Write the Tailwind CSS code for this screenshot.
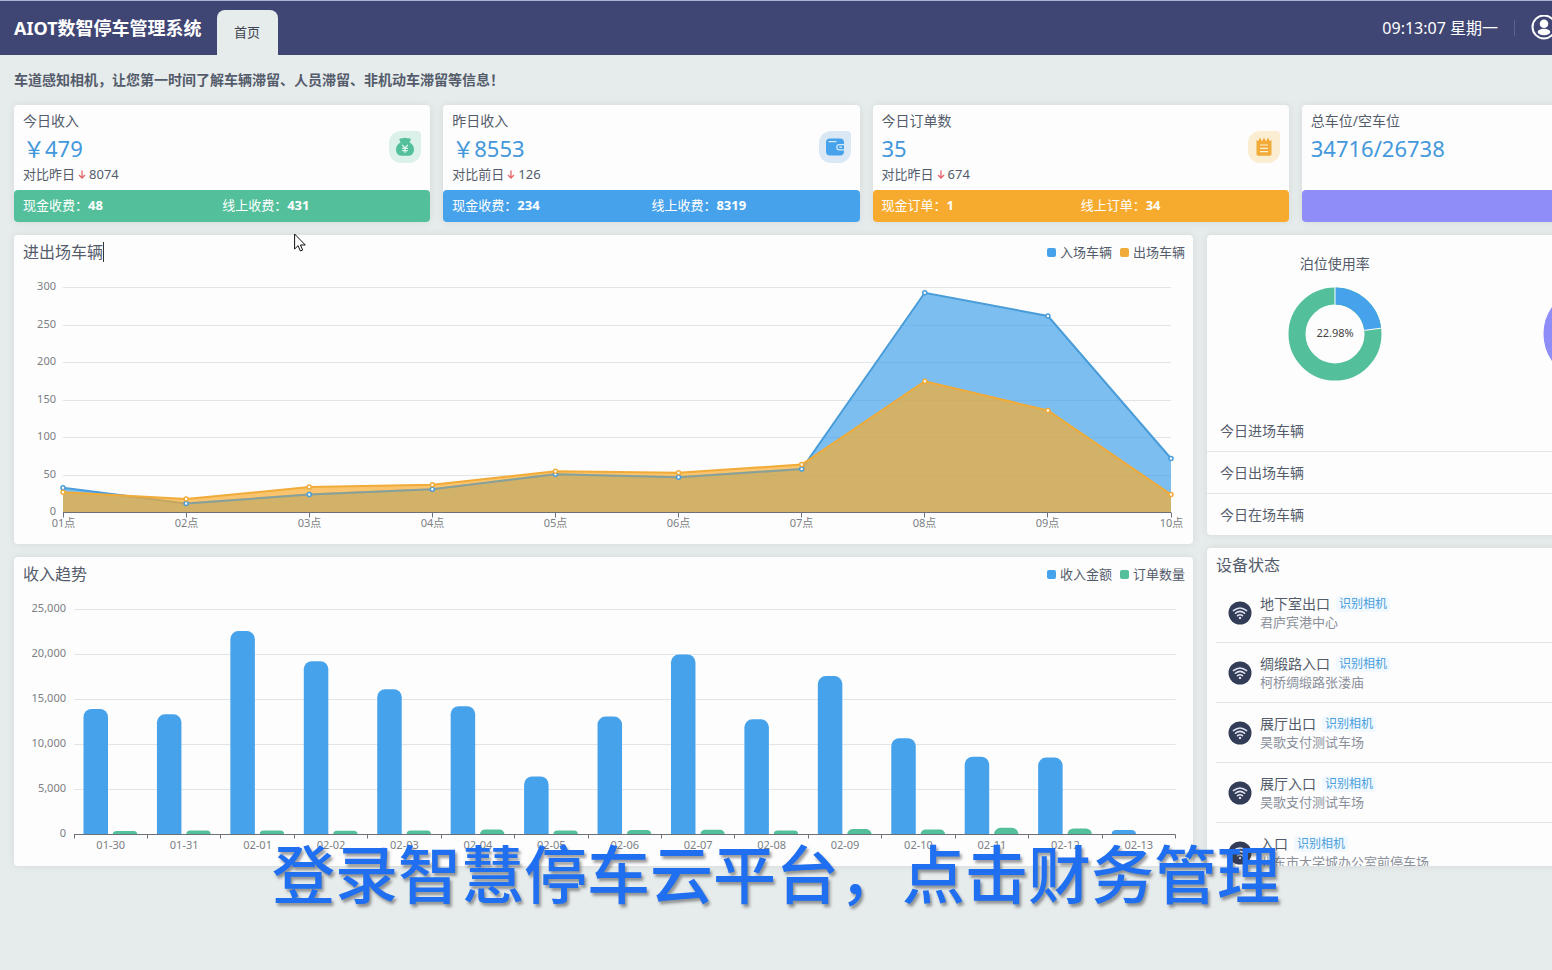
<!DOCTYPE html>
<html lang="zh-CN">
<head>
<meta charset="utf-8">
<meta name="viewport" content="width=device-width, initial-scale=1">
<title>AIOT数智停车管理系统</title>
<script src="https://cdn.jsdelivr.net/npm/@tailwindcss/browser@4"></script>
</head>
<body class="relative min-h-screen overflow-x-hidden bg-[#e6ebeb] font-['Noto_Sans','Noto_Sans_CJK_SC',sans-serif] text-[#545c6b]">

<!-- Shared symbols -->
<svg class="hidden">
  <symbol id="wifi" viewBox="0 0 24 24">
    <circle cx="12" cy="12" r="11.5" fill="#343d58"/>
    <g fill="none" stroke="#dfe3f4" stroke-width="1.5" stroke-linecap="round">
      <path d="M5.4 9.6Q12 4.2 18.6 9.6"/><path d="M7.4 12.3Q12 8.4 16.6 12.3"/><path d="M9.5 14.7Q12 12.7 14.5 14.700"/>
    </g>
    <circle cx="12" cy="16.900" r="1.2" fill="#dfe3f4"/>
  </symbol>
  <symbol id="down" viewBox="0 0 8 9">
    <path d="M4 .5V8M1 5l3 3 3-3" fill="none" stroke="#e5656a" stroke-width="1.3"/>
  </symbol>
</svg>

<div class="w-[calc(100%+180px)]">
  <header class="flex h-[55px] items-end border-t border-[#a9b5d6] bg-[#3f4673] px-3.5 text-white">
    <h1 class="self-center text-lg font-bold">AIOT数智停车管理系统</h1>
    <nav class="ml-[15px]">
      <a href="#" class="flex h-[45px] w-[61px] items-center justify-center rounded-t-lg bg-[#e6ebeb] text-[13px] text-[#3d4350]">首页</a>
    </nav>
    <div class="ml-auto flex items-center self-center">
      <time class="text-base">09:13:07 星期一</time>
      <span class="mx-4 h-4 w-px bg-[#5b628c]"></span>
      <button aria-label="用户" class="w-[187px]">
        <svg class="size-[26px]" viewBox="0 0 26 26"><circle cx="13" cy="12" r="11.5" fill="none" stroke="#fff" stroke-width="2"/><circle cx="13" cy="8.7" r="4.300" fill="#fff"/><ellipse cx="13" cy="17" rx="6.3" ry="3.2" fill="#fff"/></svg>
      </button>
    </div>
  </header>

  <main class="px-3.5">
    <p class="py-[15px] text-sm font-bold">车道感知相机，让您第一时间了解车辆滞留、人员滞留、非机动车滞留等信息！</p>

    <section class="grid grid-cols-4 gap-[13px]">
      <article class="rounded bg-[#fdfdfd] shadow-[0_0_8px_rgba(0,0,0,0.08)]">
        <div class="flex items-center justify-between px-[9px] pt-1.5 pb-[7px]">
          <div>
            <h2 class="text-sm leading-5">今日收入</h2>
            <p class="text-[22px] leading-[34px] text-[#4398dc]">￥479</p>
            <p class="flex items-center gap-[3px] text-[13px] leading-[18px]">对比昨日<svg class="h-[9px] w-2"><use href="#down"/></svg>8074</p>
          </div>
          <span class="flex size-8 items-center justify-center rounded-[12px] rounded-tr-[4px] bg-[#dcf1e9]">
            <svg class="size-[20px]" viewBox="0 0 20 20"><path fill="#53c09b" d="M4.2 2.4Q5 1 7 1.4Q10 .2 13 1.4Q15.4 1 15.8 2.6L14.6 5.6Q19 8 19 12.4Q19 18.8 12.6 18.8H7.4Q1 18.8 1 12.4Q1 8 5.6 5.6Z"/><path d="M7.2 7.8L10 11l2.8-3.2M10 11v5M7.2 11.4h5.6M7.2 13.6h5.6" fill="none" stroke="#e3f5ee" stroke-width="1.2"/></svg>
          </span>
        </div>
        <div class="grid grid-cols-2 rounded bg-[#53c09b] px-[9px] pt-[5px] pb-[7px] text-[13px] leading-5 text-white"><p>现金收费：<b>48</b></p><p>线上收费：<b>431</b></p></div>
      </article>

      <article class="rounded bg-[#fdfdfd] shadow-[0_0_8px_rgba(0,0,0,0.08)]">
        <div class="flex items-center justify-between px-[9px] pt-1.5 pb-[7px]">
          <div>
            <h2 class="text-sm leading-5">昨日收入</h2>
            <p class="text-[22px] leading-[34px] text-[#4398dc]">￥8553</p>
            <p class="flex items-center gap-[3px] text-[13px] leading-[18px]">对比前日<svg class="h-[9px] w-2"><use href="#down"/></svg>126</p>
          </div>
          <span class="flex size-8 items-center justify-center rounded-[12px] rounded-tr-[4px] bg-[#dae8f6]">
            <svg class="size-[20px]" viewBox="0 0 20 20"><rect x="1" y="1.5" width="18" height="17" rx="4" fill="#46a2ea"/><path d="M4 4.6h7" stroke="#d7eafa" stroke-width="1.4" stroke-linecap="round"/><path d="M19 7.6h-4.6a2.6 2.6 0 0 0 0 5.2H19" fill="#46a2ea" stroke="#d7eafa" stroke-width="1.2"/><path d="M14.4 10.2h2.4" stroke="#d7eafa" stroke-width="1.4"/></svg>
          </span>
        </div>
        <div class="grid grid-cols-2 rounded bg-[#46a2ea] px-[9px] pt-[5px] pb-[7px] text-[13px] leading-5 text-white"><p>现金收费：<b>234</b></p><p>线上收费：<b>8319</b></p></div>
      </article>

      <article class="rounded bg-[#fdfdfd] shadow-[0_0_8px_rgba(0,0,0,0.08)]">
        <div class="flex items-center justify-between px-[9px] pt-1.5 pb-[7px]">
          <div>
            <h2 class="text-sm leading-5">今日订单数</h2>
            <p class="text-[22px] leading-[34px] text-[#4398dc]">35</p>
            <p class="flex items-center gap-[3px] text-[13px] leading-[18px]">对比昨日<svg class="h-[9px] w-2"><use href="#down"/></svg>674</p>
          </div>
          <span class="flex size-8 items-center justify-center rounded-[12px] rounded-tr-[4px] bg-[#fbedd1]">
            <svg class="size-[20px]" viewBox="0 0 20 20"><path fill="#f0ab38" d="M2.5 3.4H5V1.6h2v1.8h2V1.6h2v1.8h2V1.6h2v1.8h2.5V17a1.8 1.8 0 0 1-1.8 1.8H4.3A1.8 1.8 0 0 1 2.5 17Z"/><path d="M6 8h8M6 11.3h8M6 14.6h8" stroke="#fdf0d8" stroke-width="1.2"/></svg>
          </span>
        </div>
        <div class="grid grid-cols-2 rounded bg-[#f6ab2f] px-[9px] pt-[5px] pb-[7px] text-[13px] leading-5 text-white"><p>现金订单：<b>1</b></p><p>线上订单：<b>34</b></p></div>
      </article>

      <article class="flex flex-col rounded bg-[#fdfdfd] shadow-[0_0_8px_rgba(0,0,0,0.08)]">
        <div class="px-[9px] pt-1.5">
          <h2 class="text-sm leading-5">总车位/空车位</h2>
          <p class="text-[22px] leading-[34px] text-[#4398dc]">34716/26738</p>
        </div>
        <div class="mt-auto h-8 rounded bg-[#8f8df8]"></div>
      </article>
    </section>

    <div class="mt-[13px] grid grid-cols-[1179fr_511fr] gap-3.5">
      <div class="flex flex-col gap-[13px]">
        <section class="rounded bg-[#fdfdfd] shadow-[0_0_8px_rgba(0,0,0,0.08)]">
          <div class="flex h-10 items-start justify-between px-2 pt-1.5">
            <h2 class="flex items-center pl-px text-base leading-[22px]">进出场车辆<span class="h-5 w-px bg-[#333]"></span></h2>
            <ul class="flex gap-2 text-[13px] leading-[22px]">
              <li class="flex items-center gap-1"><i class="size-[9px] rounded-[2px] bg-[#46a2ea]"></i>入场车辆</li>
              <li class="flex items-center gap-1"><i class="size-[9px] rounded-[2px] bg-[#f0ab38]"></i>出场车辆</li>
            </ul>
          </div>
          <svg id="flow" class="block h-auto w-full text-[11px]" viewBox="0 0 1179 269" role="img" aria-label="进出场车辆"></svg>
        </section>
        <section class="rounded bg-[#fdfdfd] shadow-[0_0_8px_rgba(0,0,0,0.08)]">
          <div class="flex h-10 items-start justify-between px-2 pt-1.5">
            <h2 class="pl-px text-base leading-[22px]">收入趋势</h2>
            <ul class="flex gap-2 text-[13px] leading-[22px]">
              <li class="flex items-center gap-1"><i class="size-[9px] rounded-[2px] bg-[#46a2ea]"></i>收入金额</li>
              <li class="flex items-center gap-1"><i class="size-[9px] rounded-[2px] bg-[#53c09b]"></i>订单数量</li>
            </ul>
          </div>
          <svg id="income" class="block h-auto w-full text-[11px]" viewBox="0 0 1179 269" role="img" aria-label="收入趋势"></svg>
        </section>
      </div>

      <div class="flex flex-col gap-[13px]">
        <section class="rounded bg-[#fdfdfd] shadow-[0_0_8px_rgba(0,0,0,0.08)]">
          <div class="grid grid-cols-2 pt-[19px] pb-7 text-center">
            <div>
              <h2 class="text-sm leading-5">泊位使用率</h2>
              <svg class="mx-auto mt-3 block size-[96px] text-[11px]" viewBox="-48 -48 96 96">
                <circle r="38" fill="none" stroke="#53c09b" stroke-width="17"/>
                <circle r="38" fill="none" stroke="#46a2ea" stroke-width="17" pathLength="100" stroke-dasharray="22.98 100" transform="rotate(-90)"/>
                <path d="M0-29V-47M29.2-3.6L46.6-5.9" stroke="#fdfdfd" stroke-width="1"/>
                <text y="3" text-anchor="middle" fill="#444">22.98%</text>
              </svg>
            </div>
            <div class="pt-8">
              <svg class="mx-auto block size-[96px]" viewBox="-48 -48 96 96"><circle r="38" fill="none" stroke="#8f8df8" stroke-width="17"/></svg>
            </div>
          </div>
          <ul class="divide-y divide-[#e4e7ea] text-sm leading-[21px]">
            <li class="px-[13px] py-2.5">今日进场车辆</li>
            <li class="px-[13px] py-2.5">今日出场车辆</li>
            <li class="px-[13px] py-2.5">今日在场车辆</li>
          </ul>
        </section>

        <section class="h-0 grow overflow-hidden rounded bg-[#fdfdfd] px-[9px] pt-1.5 shadow-[0_0_8px_rgba(0,0,0,0.08)]">
          <h2 class="text-base leading-[22px]">设备状态</h2>
          <ul class="mt-[7px] divide-y divide-[#e4e7ea]">
            <li class="flex items-center gap-2 px-3 py-[11px]"><svg class="size-6"><use href="#wifi"/></svg><div><p class="flex items-center gap-1.5 text-sm leading-5">地下室出口<span class="rounded-sm bg-[#f1f8fe] px-[3px] text-xs leading-4 text-[#4a9fdc]">识别相机</span></p><p class="text-[13px] leading-[17px] text-[#8b909b]">君庐宾港中心</p></div></li>
            <li class="flex items-center gap-2 px-3 py-[11px]"><svg class="size-6"><use href="#wifi"/></svg><div><p class="flex items-center gap-1.5 text-sm leading-5">绸缎路入口<span class="rounded-sm bg-[#f1f8fe] px-[3px] text-xs leading-4 text-[#4a9fdc]">识别相机</span></p><p class="text-[13px] leading-[17px] text-[#8b909b]">柯桥绸缎路张溇庙</p></div></li>
            <li class="flex items-center gap-2 px-3 py-[11px]"><svg class="size-6"><use href="#wifi"/></svg><div><p class="flex items-center gap-1.5 text-sm leading-5">展厅出口<span class="rounded-sm bg-[#f1f8fe] px-[3px] text-xs leading-4 text-[#4a9fdc]">识别相机</span></p><p class="text-[13px] leading-[17px] text-[#8b909b]">昊歌支付测试车场</p></div></li>
            <li class="flex items-center gap-2 px-3 py-[11px]"><svg class="size-6"><use href="#wifi"/></svg><div><p class="flex items-center gap-1.5 text-sm leading-5">展厅入口<span class="rounded-sm bg-[#f1f8fe] px-[3px] text-xs leading-4 text-[#4a9fdc]">识别相机</span></p><p class="text-[13px] leading-[17px] text-[#8b909b]">昊歌支付测试车场</p></div></li>
            <li class="flex items-center gap-2 px-3 py-[11px]"><svg class="size-6"><use href="#wifi"/></svg><div><p class="flex items-center gap-1.5 text-sm leading-5">入口<span class="rounded-sm bg-[#f1f8fe] px-[3px] text-xs leading-4 text-[#4a9fdc]">识别相机</span></p><p class="text-[13px] leading-[17px] text-[#8b909b]">北东市大学城办公室前停车场</p></div></li>
          </ul>
        </section>
      </div>
    </div>
  </main>
</div>

<!-- Mouse pointer -->
<svg class="absolute top-[233px] left-[294px] h-5 w-3" viewBox="0 0 12 20"><path d="M.6 1v15l3.5-3.3L6.4 18l2.3-1-2.3-5H11.3Z" fill="#fff" stroke="#111" stroke-width="1"/></svg>

<!-- Caption -->
<p class="absolute inset-x-0 top-[829px] text-center text-[63px] leading-[90px] font-medium whitespace-nowrap text-[#1f6ff0] [text-shadow:2px_3px_3px_rgba(60,60,60,0.5)]">登录智慧停车云平台，点击财务管理</p>

<script>
const line = (x1, y1, x2, y2, c) => `<line x1="${x1}" y1="${y1}" x2="${x2}" y2="${y2}" stroke="${c}" stroke-width="1"/>`;
const text = (x, y, anchor, s) => `<text x="${x}" y="${y}" text-anchor="${anchor}" fill="#7c7f84">${s}</text>`;
const BASE = 237.5;

// Hourly vehicle flow
{
  const left = 49, right = 1157, step = (right - left) / 9;
  const series = [
    ['#4a9cd8', '#46a2ea', [33, 12, 24, 31, 51, 47, 58, 293, 262, 72]],
    ['#f0ab38', '#f6ab2f', [27, 18, 34, 37, 55, 53, 64, 175, 136, 24]]
  ];
  let out = '';
  for (let i = 0; i <= 6; i++) {
    const y = Math.floor(BASE - i * 37.5) + 0.5;
    if (i) out += line(left, y, right, y, '#e2e5e8');
    out += text(42, y + 2, 'end', i * 50);
  }
  for (const [stroke, fill, vals] of series) {
    const pts = vals.map((v, i) => [left + i * step, BASE - v * 0.75]);
    const p = pts.map(q => q.join()).join(' ');
    out += `<polygon points="${left},${BASE} ${p} ${right},${BASE}" fill="${fill}" fill-opacity=".7"/>`;
    out += `<polyline points="${p}" fill="none" stroke="${stroke}" stroke-width="2"/>`;
    if (fill === '#f6ab2f') {
      const b = series[0][2].map((v, i) => `${left + i * step},${BASE - v * 0.75}`).slice(1, 7).join(' ');
      out += `<polyline points="${b}" fill="none" stroke="#4a9cd8" stroke-width="2" stroke-opacity=".5"/>`;
    }
  }
  for (const [stroke, , vals] of series)
    vals.forEach((v, i) => { out += `<circle cx="${left + i * step}" cy="${BASE - v * 0.75}" r="2" fill="#fff" stroke="${stroke}" stroke-width="1.5"/>`; });
  out += line(left, BASE, right, BASE, '#6e7079');
  for (let i = 0; i < 10; i++) {
    const x = Math.floor(left + i * step) + 0.5;
    out += line(x, BASE, x, BASE + 5, '#6e7079') + text(x, 252, 'middle', String(i + 1).padStart(2, '0') + '点');
  }
  document.getElementById('flow').innerHTML = out;
}

// Daily income and orders
{
  const left = 60, right = 1161.5, step = (right - left) / 15;
  const days = ['01-30', '01-31', '02-01', '02-02', '02-03', '02-04', '02-05', '02-06', '02-07', '02-08', '02-09', '02-10', '02-11', '02-12', '02-13'];
  const income = [13950, 13350, 22600, 19250, 16150, 14250, 6450, 13100, 20000, 12800, 17600, 10700, 8650, 8550, 500];
  const orders = [400, 450, 450, 430, 450, 550, 450, 500, 530, 450, 600, 550, 750, 680, 40];
  const bar = (x, v, c) => {
    const h = v * 0.009, r = Math.min(8, h), w = 24.5;
    return `<path d="M${x} ${BASE}V${BASE - h + r}a${r} ${r} 0 0 1 ${r} ${-r}h${w - 2 * r}a${r} ${r} 0 0 1 ${r} ${r}V${BASE}Z" fill="${c}"/>`;
  };
  let out = '';
  for (let i = 0; i <= 5; i++) {
    const y = BASE - i * 45;
    if (i) out += line(left, y, right, y, '#e2e5e8');
    out += text(52, y + 2, 'end', (i * 5000).toLocaleString('en-US'));
  }
  days.forEach((d, i) => {
    const x = left + i * step;
    out += bar(x + 9.5, income[i], '#46a2ea') + bar(x + 38.8, orders[i], '#53c09b') + text(x + step / 2, 252, 'middle', d);
  });
  out += line(left, BASE, right, BASE, '#6e7079');
  for (let i = 0; i <= 15; i++) {
    const x = Math.floor(left + i * step) + 0.5;
    out += line(x, BASE, x, BASE + 4, '#6e7079');
  }
  document.getElementById('income').innerHTML = out;
}
</script>
</body>
</html>
